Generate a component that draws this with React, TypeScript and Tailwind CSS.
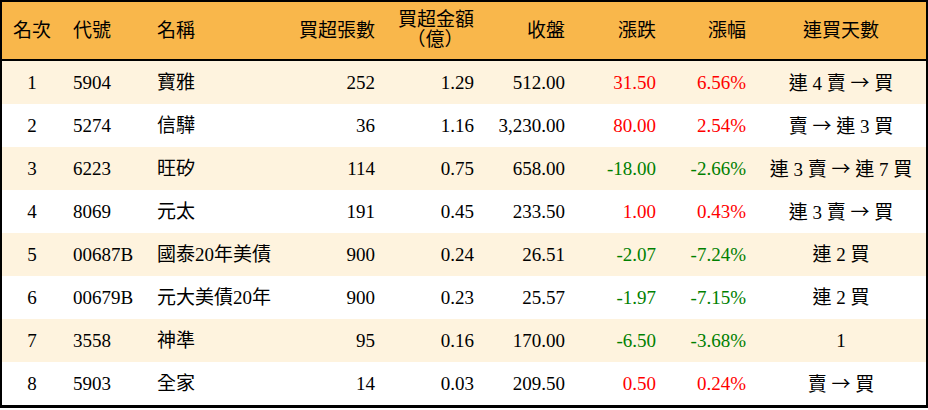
import React from "react"

type Row = {
  rank: number
  code: string
  name: string
  vol: string
  amt: string
  close: string
  chg: string
  pct: string
  days: string
}

const rows: Row[] = [
  { rank: 1, code: "5904", name: "寶雅", vol: "252", amt: "1.29", close: "512.00", chg: "31.50", pct: "6.56%", days: "連 4 賣 → 買" },
  { rank: 2, code: "5274", name: "信驊", vol: "36", amt: "1.16", close: "3,230.00", chg: "80.00", pct: "2.54%", days: "賣 → 連 3 買" },
  { rank: 3, code: "6223", name: "旺矽", vol: "114", amt: "0.75", close: "658.00", chg: "-18.00", pct: "-2.66%", days: "連 3 賣 → 連 7 買" },
  { rank: 4, code: "8069", name: "元太", vol: "191", amt: "0.45", close: "233.50", chg: "1.00", pct: "0.43%", days: "連 3 賣 → 買" },
  { rank: 5, code: "00687B", name: "國泰20年美債", vol: "900", amt: "0.24", close: "26.51", chg: "-2.07", pct: "-7.24%", days: "連 2 買" },
  { rank: 6, code: "00679B", name: "元大美債20年", vol: "900", amt: "0.23", close: "25.57", chg: "-1.97", pct: "-7.15%", days: "連 2 買" },
  { rank: 7, code: "3558", name: "神準", vol: "95", amt: "0.16", close: "170.00", chg: "-6.50", pct: "-3.68%", days: "1" },
  { rank: 8, code: "5903", name: "全家", vol: "14", amt: "0.03", close: "209.50", chg: "0.50", pct: "0.24%", days: "賣 → 買" },
]

const cols = "grid grid-cols-[60px_84px_144px_95px_99px_91px_91px_90px_170px]"

// render the arrow in the CJK face so it comes out full width, like the reference
function Days({ text }: { text: string }) {
  const parts = text.split("→")
  return (
    <>
      {parts.map((p, i) => (
        <React.Fragment key={i}>
          {i > 0 && <span style={{ fontFamily: '"Noto Sans CJK TC", sans-serif' }}>→</span>}
          {p}
        </React.Fragment>
      ))}
    </>
  )
}

export default function App() {
  return (
    <div
      className="w-[928px] h-[410px] bg-white text-black text-[19px] leading-none"
      style={{ fontFamily: '"Liberation Serif", "Noto Sans CJK TC", serif' }}
    >
      <div className="border-black border-t-2 border-x-2 border-b-[3px]">
        {/* header */}
        <div className={`${cols} h-[59px] items-center bg-[#f9b74b] border-b-2 border-black`}>
          <div className="text-center">名次</div>
          <div className="pl-[11px]">代號</div>
          <div className="pl-[11px]">名稱</div>
          <div className="text-right pr-[10px]">買超張數</div>
          <div className="flex flex-col items-end pr-[10px] leading-[20px] -mt-[1px]">
            <span>買超金額</span>
            <span className="w-[78px] text-center">（億）</span>
          </div>
          <div className="text-right pr-[10px]">收盤</div>
          <div className="text-right pr-[10px]">漲跌</div>
          <div className="text-right pr-[10px]">漲幅</div>
          <div className="text-center">連買天數</div>
        </div>

        {rows.map((r, i) => {
          const up = !r.chg.startsWith("-")
          const color = up ? "text-[#ff0000]" : "text-[#008000]"
          return (
            <div
              key={r.code}
              className={`${cols} h-[43px] items-center ${i % 2 === 0 ? "bg-[#fef3de]" : "bg-white"}`}
            >
              <div className="text-center">{r.rank}</div>
              <div className="pl-[11px]">{r.code}</div>
              <div className="pl-[11px]">{r.name}</div>
              <div className="text-right pr-[10px]">{r.vol}</div>
              <div className="text-right pr-[10px]">{r.amt}</div>
              <div className="text-right pr-[10px]">{r.close}</div>
              <div className={`text-right pr-[10px] ${color}`}>{r.chg}</div>
              <div className={`text-right pr-[10px] ${color}`}>{r.pct}</div>
              <div className="text-center">
                <Days text={r.days} />
              </div>
            </div>
          )
        })}
      </div>
    </div>
  )
}
